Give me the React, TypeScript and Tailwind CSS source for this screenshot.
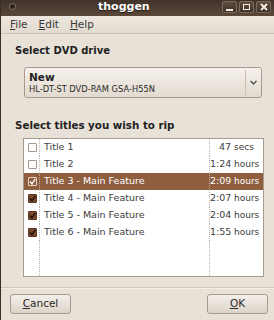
import React from "react";

type TitleRow = {
    name: string;
    num: string;
    unit: string;
    checked: boolean;
    selected?: boolean;
};

const rows: TitleRow[] = [
    { name: "Title 1", num: "47", unit: "secs", checked: false },
    { name: "Title 2", num: "1:24", unit: "hours", checked: false },
    { name: "Title 3 - Main Feature", num: "2:09", unit: "hours", checked: true, selected: true },
    { name: "Title 4 - Main Feature", num: "2:07", unit: "hours", checked: true },
    { name: "Title 5 - Main Feature", num: "2:04", unit: "hours", checked: true },
    { name: "Title 6 - Main Feature", num: "1:55", unit: "hours", checked: true },
];

function CheckBox({ checked, selected }: { checked: boolean; selected?: boolean }) {
    if (!checked) {
        return <div className="w-[9px] h-[9px] border border-[#a59a8c] bg-white rounded-[1px]" />;
    }
    return (
        <div
            className={`w-[9px] h-[9px] border rounded-[1px] flex items-center justify-center ${
                selected ? "border-[#e9d6c8] bg-[#8f5e3f]" : "border-[#5a3420] bg-[#7b4a2d]"
            }`}
        >
            <svg width="7" height="7" viewBox="0 0 7 7">
                <path d="M1 3.5 L3 5.8 L6.2 0.8" fill="none" stroke={selected ? "#ffffff" : "#1a0d05"} strokeWidth="1.3" />
            </svg>
        </div>
    );
}

function WinButton({ children }: { children: React.ReactNode }) {
    return (
        <div className="w-[15px] h-[12px] rounded-[2px] border border-[#7d6a5b] bg-gradient-to-b from-[#5e4c3f] to-[#3e3129] flex items-center justify-center">
            {children}
        </div>
    );
}

export default function App() {
    return (
        <div
            className="w-[274px] h-[320px] flex flex-col bg-[#e8e1d7] border-l border-[#3a2e26] overflow-hidden text-[#2e2e2e]"
            style={{ fontFamily: '"DejaVu Sans", sans-serif' }}
        >
            {/* title bar */}
            <div className="h-[16px] shrink-0 bg-gradient-to-b from-[#3f332b] to-[#5b4738] flex items-center pl-[8px] pr-[3px]">
                <div className="w-[7px] h-[7px] rounded-full border border-[#8a7a6c] bg-[#2c231d] mb-[3px]" />
                <div className="flex-1 pl-[82px] text-[11px] font-bold text-white leading-none mb-[3px] [text-shadow:0_1px_1px_#1b130e]">
                    thoggen
                </div>
                <div className="flex gap-[2px] mb-[2px]">
                    <WinButton>
                        <div className="w-[7px] h-[2px] bg-[#f2ece6] mt-[5px]" />
                    </WinButton>
                    <WinButton>
                        <div className="w-[7px] h-[6px] border-[1.5px] border-[#f2ece6]" />
                    </WinButton>
                    <WinButton>
                        <svg width="8" height="8" viewBox="0 0 8 8">
                            <path d="M1 1 L7 7 M7 1 L1 7" stroke="#f2ece6" strokeWidth="2" />
                        </svg>
                    </WinButton>
                </div>
            </div>

            {/* menu bar */}
            <div className="h-[18px] shrink-0 bg-gradient-to-b from-[#ede7df] to-[#e3dbd0] border-b border-[#cbc1b4] flex items-center pl-[9px] gap-[11px] text-[10.5px] text-[#3a3a3a]">
                <span><span className="underline">F</span>ile</span>
                <span><span className="underline">E</span>dit</span>
                <span><span className="underline">H</span>elp</span>
            </div>

            {/* content */}
            <div className="flex-1 flex flex-col px-[9px]">
                <div className="mt-[10px] pl-[5px] text-[10px] font-bold text-[#222] leading-[13px]">Select DVD drive</div>

                <div className="mt-[10px] ml-[14px] mr-[3px] h-[31px] rounded-[3px] border border-[#a69b8d] bg-gradient-to-b from-[#f5f1ec] to-[#e2dacf] flex items-center">
                    <div className="flex-1 pl-[4px] flex flex-col">
                        <span className="text-[10.5px] font-bold text-[#1e1e1e] leading-[12px]">New</span>
                        <span className="text-[8.3px] text-[#2b2b2b] leading-[11px] mt-[1px]">HL-DT-ST DVD-RAM GSA-H55N</span>
                    </div>
                    <div className="w-px h-[25px] bg-[#c8beb1]" />
                    <div className="w-[15px] flex items-center justify-center">
                        <svg width="7" height="5" viewBox="0 0 7 5">
                            <path d="M0.5 0.8 L3.5 3.8 L6.5 0.8" fill="none" stroke="#3a3a3a" strokeWidth="1.2" />
                        </svg>
                    </div>
                </div>

                <div className="mt-[21px] pl-[5px] text-[10.3px] font-bold text-[#222] leading-[13px]">
                    Select titles you wish to rip
                </div>

                <div className="mt-[6px] ml-[13px] mr-[1px] h-[139px] border border-[#a69b8d] bg-white flex flex-col">
                    {rows.map((r) => (
                        <div
                            key={r.name}
                            className={`h-[17px] flex items-center text-[9.5px] ${
                                r.selected ? "bg-[#8f5e3f] text-white" : "text-[#3c3c3c]"
                            }`}
                        >
                            <div className="w-[16px] h-full flex items-center justify-center border-r border-dotted border-[#b9b2aa] pl-[1px]">
                                <CheckBox checked={r.checked} selected={r.selected} />
                            </div>
                            <div className="flex-1 pl-[4px]">{r.name}</div>
                            <div className="w-[54px] h-full flex items-center border-l border-dotted border-[#b9b2aa]">
                                <span className="w-[21px] text-right">{r.num}</span>
                                <span className="pl-[3px] text-[9px]">{r.unit}</span>
                            </div>
                        </div>
                    ))}
                    <div className="flex-1 flex">
                        <div className="w-[16px] border-r border-dotted border-[#b9b2aa]" />
                        <div className="flex-1" />
                        <div className="w-[54px] border-l border-dotted border-[#b9b2aa]" />
                    </div>
                </div>

                <div className="mt-[10px] -mx-[9px] h-px bg-[#cfc5b8] border-b border-[#f3efea] box-content" />

                <div className="mt-[5px] flex justify-between">
                    <button className="w-[61px] h-[20px] rounded-[3px] border border-[#a69b8d] bg-gradient-to-b from-[#f3efea] to-[#ddd4c8] text-[10.5px] text-[#2a2a2a]">
                        <span className="underline">C</span>ancel
                    </button>
                    <button className="w-[61px] h-[20px] -mr-[3px] rounded-[3px] border border-[#a69b8d] bg-gradient-to-b from-[#f3efea] to-[#ddd4c8] text-[10.5px] text-[#2a2a2a]">
                        <span className="underline">O</span>K
                    </button>
                </div>
            </div>
        </div>
    );
}
